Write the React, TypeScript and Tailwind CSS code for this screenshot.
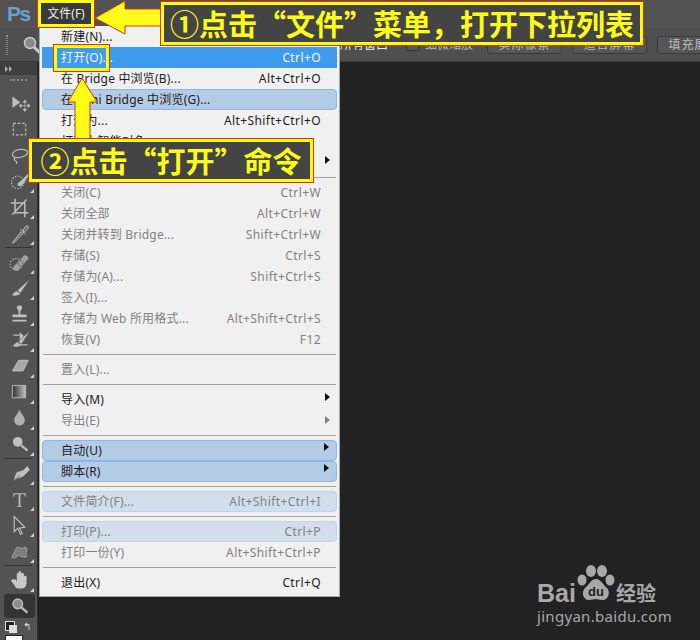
import type { ReactNode } from "react"

type Row =
  | { sep: true }
  | {
      label: string
      key?: string
      off?: boolean
      pill?: "hot" | "blue" | "pale"
      sub?: boolean
    }

const rows: Row[] = [
  { label: "新建(N)...", key: "Ctrl+N" },
  { label: "打开(O)...", key: "Ctrl+O", pill: "hot" },
  { label: "在 Bridge 中浏览(B)...", key: "Alt+Ctrl+O" },
  { label: "在 Mini Bridge 中浏览(G)...", pill: "blue" },
  { label: "打开为...", key: "Alt+Shift+Ctrl+O" },
  { label: "打开为智能对象..." },
  { label: "最近打开文件(T)", sub: true },
  { sep: true },
  { label: "关闭(C)", key: "Ctrl+W", off: true },
  { label: "关闭全部", key: "Alt+Ctrl+W", off: true },
  { label: "关闭并转到 Bridge...", key: "Shift+Ctrl+W", off: true },
  { label: "存储(S)", key: "Ctrl+S", off: true },
  { label: "存储为(A)...", key: "Shift+Ctrl+S", off: true },
  { label: "签入(I)...", off: true },
  { label: "存储为 Web 所用格式...", key: "Alt+Shift+Ctrl+S", off: true },
  { label: "恢复(V)", key: "F12", off: true },
  { sep: true },
  { label: "置入(L)...", off: true },
  { sep: true },
  { label: "导入(M)", sub: true },
  { label: "导出(E)", sub: true, off: true },
  { sep: true },
  { label: "自动(U)", sub: true, pill: "blue" },
  { label: "脚本(R)", sub: true, pill: "blue" },
  { sep: true },
  { label: "文件简介(F)...", key: "Alt+Shift+Ctrl+I", off: true, pill: "pale" },
  { sep: true },
  { label: "打印(P)...", key: "Ctrl+P", off: true, pill: "pale" },
  { label: "打印一份(Y)", key: "Alt+Shift+Ctrl+P", off: true },
  { sep: true },
  { label: "退出(X)", key: "Ctrl+Q" },
]

function MenuRow({ row }: { row: Row }) {
  if ("sep" in row) {
    return (
      <div className="h-[9px] flex items-center">
        <div className="h-px w-full mx-[3px] bg-[#a2a2a2]" />
      </div>
    )
  }
  const pill =
    row.pill === "hot"
      ? "bg-[#3f9beb] text-[#f4f8fc] pl-[19px] pr-[16px]"
      : row.pill === "blue"
        ? "bg-[#b4cbe6] border border-[#8fb7e6] rounded-[4px] pl-[18px] pr-[15px]"
        : row.pill === "pale"
          ? "bg-[#d2deeb] border border-[#c0d4ea] rounded-[4px] pl-[18px] pr-[15px]"
          : "pl-[19px] pr-[16px]"
  const color = row.pill === "hot" ? "" : row.off ? "text-[#828282]" : "text-[#1c1c1c]"
  return (
    <div className={`h-[21px] mx-[2px] flex items-center justify-between relative ${pill} ${color}`}>
      <span className="tracking-[0.2px]">{row.label}</span>
      {row.key && <span className="tracking-[0.4px]">{row.key}</span>}
      {row.sub && (
        <span
          className={`absolute right-[7px] w-0 h-0 border-y-[4px] border-y-transparent border-l-[5px] ${
            row.off ? "top-[6px] border-l-[#808080]" : row.pill ? "top-[2px] border-l-[#111]" : "top-[4px] border-l-[#111]"
          }`}
        />
      )}
    </div>
  )
}

const s = "#bdbdbd"

const icons: ReactNode[] = [
  // move
  <g key="move">
    <path d="M5 5v13l9-6.5z" fill={s} />
    <path d="M19 10v11M13.5 15.5h11M19 9l-2 2.5h4zM19 22l-2-2.5h4zM12.5 15.5l2.5-2v4zM25 15.5l-2.5-2v4z" stroke={s} strokeWidth="0.8" fill={s} />
  </g>,
  // marquee
  <rect key="marq" x="6" y="6" width="14" height="13" fill="none" stroke={s} strokeWidth="1.3" strokeDasharray="3 2" />,
  // lasso
  <path key="lasso" d="M5 12c0-4 5-6 10-6s8 2 7 4.5-6 5-11 5c-3 0-6-1-6-3.5zM8 15c-2 2 0 4 1 4.5s1 2 0 3" fill="none" stroke={s} strokeWidth="1.3" />,
  // quick select
  <g key="quick">
    <circle cx="11" cy="14" r="7" fill="none" stroke={s} strokeWidth="1.3" strokeDasharray="1.6 1.6" />
    <path d="M23 4l-8 8-4 3c-1 2 1 4 4 3l3-3 6-10z" fill={s} />
  </g>,
  // crop
  <path key="crop" d="M8 3v16h15M3 8h16v16M21 4L5 21" fill="none" stroke={s} strokeWidth="1.7" />,
  // eyedropper
  <path key="drop" d="M6 22l-1 2 2-1 10-10-2-2zM14 8l6 6M17 9l3-4c1-1 3-1 3 1s-1 2-2 3l-3 3z" fill="#707070" stroke={s} strokeWidth="1.1" />,
  // healing
  <g key="heal">
    <circle cx="9" cy="15" r="6.5" fill="none" stroke={s} strokeWidth="1.2" strokeDasharray="1.6 1.6" />
    <path d="M6 18L18 5c2-1 5 1 5 4L11 22c-3 1-6-1-5-4z" fill="#a0a0a0" />
    <path d="M11 14l4 4M14 11l4 4" stroke="#666" strokeWidth="2" strokeDasharray="1.5 1.5" />
  </g>,
  // brush
  <path key="brush" d="M24 3L11 15l3 3zM10 16c-3 0-3 3-6 4 3 2 8 1 10-1z" fill={s} />,
  // stamp
  <path key="stamp" d="M10 5c0-3 6-3 6 0 0 2-2 3-2 5v3h7v3H5v-3h7v-3c0-2-2-3-2-5zM5 19h16v2H5z" fill={s} />,
  // history brush
  <g key="hist">
    <path d="M24 3L12 14l3 3zM11 15c-3 0-3 3-6 4 3 2 8 1 10-1z" fill={s} />
    <path d="M6 7h9M17 8l-3-3v6zM22 18H13" stroke={s} strokeWidth="1.4" fill={s} />
  </g>,
  // eraser
  <path key="erase" d="M12 6h11L17 18H5z" fill="#a8a8a8" stroke="#c4c4c4" strokeWidth="1" />,
  // gradient
  <g key="grad">
    <defs>
      <linearGradient id="toolgrad">
        <stop offset="0" stopColor="#2e2e2e" />
        <stop offset="1" stopColor="#c4c4c4" />
      </linearGradient>
    </defs>
    <rect x="5" y="5" width="15" height="14" fill="url(#toolgrad)" stroke="#b4b4b4" strokeWidth="1.1" />
  </g>,
  // blur drop
  <path key="blur" d="M13 3c2 5 6 8 6 12a6 6 0 0 1-12 0c0-4 4-7 6-12z" fill="#b0b0b0" />,
  // dodge
  <g key="dodge">
    <circle cx="11" cy="10" r="5.5" fill="#c0c0c0" />
    <path d="M15 14l7 6" stroke={s} strokeWidth="2.6" />
  </g>,
  // pen
  <path key="pen" d="M22 4l3 5-8 8c-3 1-8 2-11 5 1-4 2-9 4-11l7-2 2-2zM7 21l6-6" fill={s} stroke="#555" strokeWidth="0.8" />,
  // type
  <path key="type" d="M6 6h14v4h-.7l-1-3h-4.3v13l2 .7v.5H10v-.5l2-.7V7H7.7l-1 3H6z" fill={s} />,
  // path select
  <path key="sel" d="M7 3v17l4-4 3 7 2-1-3-6 6-1z" fill="#505050" stroke="#c4c4c4" strokeWidth="1.2" />,
  // custom shape
  <path key="shape" d="M5 20c-1-4 3-5 3-8s4-5 6-3 5-3 7 0-2 5 0 8-5 3-7 1-7 5-9 2z" fill="#7e7e7e" stroke="#b4b4b4" strokeWidth="1.1" strokeDasharray="2 1" />,
  // hand
  <path key="hand" d="M7 12c1-1 2 0 3 2V6c0-2 2-2 2 0V4c0-2 3-2 3 0v2c0-2 3-2 3 0v3c0-2 3-2 3 0v6c0 4-2 7-5 7h-4c-3 0-4-2-5-4l-3-4c-1-1 1-3 3-2z" fill="#c8c8c8" />,
  // zoom
  <g key="zoom">
    <circle cx="11" cy="10" r="5.5" fill="#8e8e8e" stroke="#bdbdbd" strokeWidth="1.5" />
    <path d="M15 14l7 6" stroke={s} strokeWidth="2.6" />
  </g>,
]

const noCorner = new Set(["move", "lasso"])

function Tool({ icon, active }: { icon: ReactNode; active?: boolean }) {
  const key = (icon as { key?: string }).key ?? ""
  return (
    <div
      className={`w-[31px] ml-[4px] relative flex items-center justify-center ${
        active ? "bg-[#343434] rounded-[3px] h-[24px] my-[1px]" : "h-[26px]"
      }`}
    >
      <svg width="23" height="23" viewBox="0 0 26 26" className="block">
        {icon}
      </svg>
      {!noCorner.has(key) && !active ? (
        <span className="absolute right-[1px] bottom-[1px] w-0 h-0 border-l-[4px] border-l-transparent border-b-[4px] border-b-[#d0d0d0]" />
      ) : null}
    </div>
  )
}

function ToolSep() {
  return <div className="h-px mx-[5px] my-[1px] bg-[#333] shrink-0" />
}

function Toolbar() {
  return (
    <div className="w-[38px] bg-[#535353] border-r border-[#2e2e2e] flex flex-col shrink-0 overflow-hidden">
      <div className="h-[13px] bg-[#3f3f3f] flex items-center pl-[5px] shrink-0">
        <span className="w-0 h-0 border-y-[3px] border-y-transparent border-l-[3px] border-l-[#b0b0b0]" />
        <span className="ml-[1px] w-0 h-0 border-y-[3px] border-y-transparent border-l-[3px] border-l-[#b0b0b0]" />
      </div>
      <div className="h-[2px] mt-[4px] mx-[10px] border-t-2 border-dotted border-[#888] shrink-0" />
      <div className="mt-[9px]">
        {icons.slice(0, 6).map((ic, i) => <Tool key={i} icon={ic} />)}
        <ToolSep />
        {icons.slice(6, 14).map((ic, i) => <Tool key={i} icon={ic} />)}
        <ToolSep />
        {icons.slice(14, 18).map((ic, i) => <Tool key={i} icon={ic} />)}
        <ToolSep />
        <Tool icon={icons[18]} />
        <Tool icon={icons[19]} active />
      </div>
      <div className="flex items-center gap-[8px] pl-[5px] mt-[2px] shrink-0">
        <span className="relative w-[10px] h-[10px] border border-[#ddd] bg-[#222]">
          <span className="absolute left-[3px] top-[3px] w-[8px] h-[8px] bg-[#ddd]" />
        </span>
        <span className="text-[#ddd] text-[10px] leading-none">↰</span>
      </div>
      <div className="ml-[5px] mt-[4px] w-[18px] h-[10px] bg-white border border-[#222] shrink-0" />
    </div>
  )
}

function OptionButton({ children }: { children: string }) {
  return (
    <div className="h-[18px] w-[75px] shrink-0 border border-[#3a3a3a] rounded-[3px] bg-[#565656] text-[#bcbcbc] flex items-center justify-center tracking-[1px]">
      {children}
    </div>
  )
}

function OptionsBar() {
  return (
    <div className="h-[34px] bg-[#4f4f4f] border-b border-[#3c3c3c] flex items-center text-[12px] text-[#bcbcbc] shrink-0 overflow-hidden whitespace-nowrap">
      <div className="ml-[6px] w-[3px] h-[20px] border-x border-dotted border-[#888]" />
      <svg width="22" height="22" viewBox="0 0 22 22" className="ml-[13px] shrink-0">
        <circle cx="9" cy="9" r="5.5" fill="#8a8a8a" stroke="#c8c8c8" strokeWidth="1.5" />
        <path d="M13 13l6 6" stroke="#c8c8c8" strokeWidth="3" />
      </svg>
      <span className="ml-[297px] text-[#e6e6e6] shrink-0">所有窗口</span>
      <span className="ml-[18px] w-[13px] h-[13px] border border-[#333] rounded-[2px] bg-[#555] shrink-0" />
      <span className="ml-[6px] shrink-0">细微缩放</span>
      <div className="ml-[14px] flex gap-[10px]">
        <OptionButton>实际像素</OptionButton>
        <OptionButton>适合屏幕</OptionButton>
        <OptionButton>填充屏幕</OptionButton>
      </div>
    </div>
  )
}

function Watermark() {
  return (
    <div className="absolute left-[537px] top-[565px] text-[#a8a8a8] font-['Liberation_Sans',sans-serif]">
      <div className="flex items-end h-[40px]">
        <span className="text-[25px] font-bold leading-[24px]">Bai</span>
        <svg width="40" height="40" viewBox="0 0 40 40" className="shrink-0">
          <ellipse cx="6" cy="15" rx="4.5" ry="5.5" fill="#a8a8a8" />
          <ellipse cx="15" cy="6" rx="5" ry="6" fill="#a8a8a8" />
          <ellipse cx="26" cy="6" rx="5" ry="6" fill="#a8a8a8" />
          <ellipse cx="34" cy="15" rx="4.5" ry="5.5" fill="#a8a8a8" />
          <path d="M20 14c5 0 7 6 11 9 4 4 1 13-5 12-3 0-4-1-6-1s-4 1-7 1c-6 0-8-8-4-12 4-3 6-9 11-9z" fill="#a8a8a8" />
          <text x="20" y="31" textAnchor="middle" fontSize="13" fontWeight="700" fill="#222">du</text>
        </svg>
        <span className="text-[20px] font-bold leading-[24px] font-['Noto_Sans_CJK_SC',sans-serif]">经验</span>
      </div>
      <div className="text-[15px] leading-[16px] mt-[3px] tracking-[0.3px] font-['Noto_Sans',sans-serif]">jingyan.baidu.com</div>
    </div>
  )
}

function Callout({ className, children }: { className: string; children: string }) {
  return (
    <div
      className={`absolute h-[43px] bg-[#444] border-[3px] border-[#fcfc18] outline outline-1 outline-[#d8360c] flex items-center justify-center text-[#fcfc18] text-[29px] font-bold whitespace-nowrap font-['Noto_Sans_CJK_SC',sans-serif] ${className}`}
    >
      {children}
    </div>
  )
}

export default function App() {
  return (
    <div className="relative w-[700px] h-[640px] overflow-hidden bg-[#222222] font-['Noto_Sans','Noto_Sans_CJK_SC',sans-serif] text-[12px]">
      <div className="flex flex-col h-full">
        <div className="h-[28px] bg-[#525252] flex items-center pb-[2px] shrink-0">
          <span className="ml-[7px] text-[#6f9fcc] text-[21px] font-bold leading-none tracking-[-1.5px] font-['Liberation_Sans',sans-serif]">Ps</span>
        </div>
        <OptionsBar />
        <div className="flex-1 flex min-h-0">
          <Toolbar />
          <div className="flex-1 bg-[#222222]" />
        </div>
      </div>

      {/* 文件 menu */}
      <div className="absolute left-[39px] top-[26px] w-[301px] bg-[#f0f0f0] border border-[#a8a8a8] border-t-0 pb-[3px]">
        {rows.map((row, i) => (
          <MenuRow key={i} row={row} />
        ))}
      </div>

      {/* 文件(F) highlight */}
      <div className="absolute left-[38px] top-0 w-[56px] h-[27px] bg-[#3a3a3a] border-[3px] border-[#fcfc18] outline outline-1 outline-[#d8360c] text-[#eeeeee] flex items-center justify-center">
        文件(F)
      </div>

      {/* 打开 highlight */}
      <div className="absolute left-[54px] top-[45px] w-[55px] h-[26px] border-[3px] border-[#fcfc18] outline outline-1 outline-[#d8360c]" />

      {/* arrows */}
      <svg width="700" height="640" viewBox="0 0 700 640" className="absolute left-0 top-0 pointer-events-none">
        <path d="M95 18L125 1v8h38v17h-38v8z" fill="#fcfc18" stroke="#d8360c" strokeWidth="1" />
        <path d="M82 78L97 102h-7v38H75v-38h-7z" fill="#fcfc18" stroke="#d8360c" strokeWidth="1" />
      </svg>

      <Callout className="left-[161px] top-[2px] w-[482px]">①点击“文件”菜单，打开下拉列表</Callout>
      <Callout className="left-[29px] top-[139px] w-[284px]">②点击“打开”命令</Callout>

      <Watermark />
    </div>
  )
}
